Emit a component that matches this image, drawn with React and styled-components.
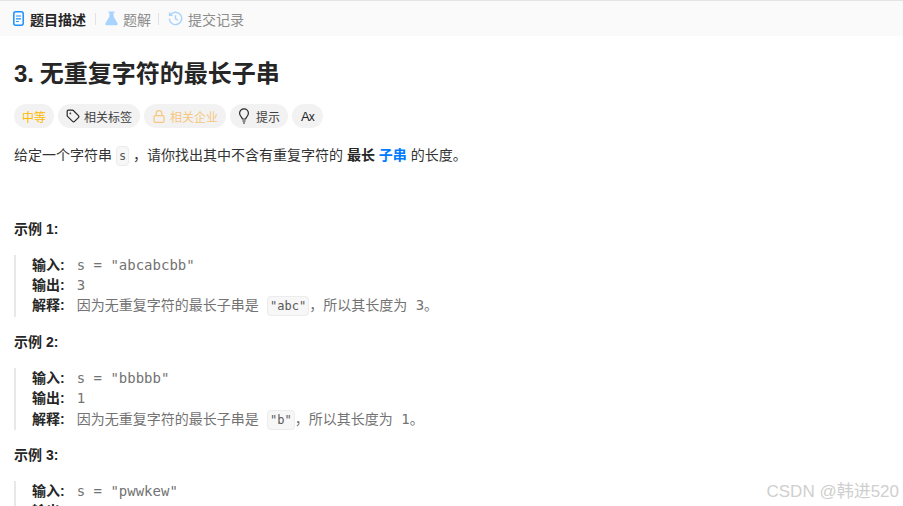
import React from "react";
import styled, { createGlobalStyle } from "styled-components";
import { Tag } from "lucide-react";

const cjk = `"Liberation Sans", "Noto Sans CJK SC", sans-serif`;
const mono = `"DejaVu Sans Mono", "Noto Sans CJK SC", monospace`;
const COMMA = "\uFF0C";

const GlobalStyle = createGlobalStyle`
  html, body {
    margin: 0;
    height: 100%;
    overflow: hidden;
    background: #fff;
  }
  body {
    font-family: ${cjk};
    color: #262626;
  }
`;

const Page = styled.div`
  position: relative;
  width: 903px;
  height: 506px;
  overflow: hidden;
`;

const TabBar = styled.div`
  display: flex;
  align-items: center;
  height: 35px;
  padding-left: 13px;
  background: #fafafa;
  border-top: 1px solid #e4e4e4;
`;

const TabItem = styled.div`
  display: flex;
  align-items: center;
  gap: ${props => props.gap}px;
  font-size: 14px;
  font-weight: ${props => (props.active ? 600 : 400)};
  color: ${props => (props.active ? "#262626" : "#8c8c8c")};
`;

const TabDivider = styled.div`
  width: 1px;
  height: 12px;
  margin: 0 9px 0 ${props => props.left}px;
  background: #e2e2e2;
`;

const Content = styled.div`
  padding: 0 14px;
`;

const Title = styled.h1`
  margin: 22px 0 0;
  font-size: 24px;
  line-height: 32px;
  font-weight: 700;
  word-spacing: -1px;
  color: #262626;
`;

const ChipRow = styled.div`
  display: flex;
  gap: 4px;
  margin-top: 14px;
`;

const Chip = styled.div`
  display: flex;
  align-items: center;
  gap: ${props => props.gap || 4}px;
  height: 24px;
  padding: 0 8px;
  border-radius: 12px;
  background: #f2f2f2;
  font-size: 12px;
  color: ${props => props.color || "#404040"};
`;

const Description = styled.p`
  margin: 16px 0 0;
  font-size: 14px;
  line-height: 22px;
  color: #333;
`;

const InlineCode = styled.code`
  font-family: ${mono};
  font-size: 12px;
  padding: 2px;
  color: #595959;
  background: #f7f7f7;
  border: 1px solid #ececec;
  border-radius: 4px;
`;

const Strong = styled.b`
  font-weight: 700;
  color: ${props => props.color || "#262626"};
`;

const ExampleTitle = styled.div`
  margin-top: ${props => props.top}px;
  font-size: 14px;
  line-height: 20px;
  font-weight: 700;
  color: #262626;
`;

const Quote = styled.div`
  margin-top: 15.5px;
  padding-left: 16px;
  border-left: 2px solid #e8e8e8;
  font-size: 14px;
  line-height: 20.4px;
  white-space: nowrap;
`;

const QuoteLine = styled.div`
  color: #737373;
  font-family: ${mono};

  b {
    font-family: ${cjk};
    font-weight: 700;
    color: #262626;
    margin-right: 12px;
  }
`;

const Prose = styled.span`
  font-family: ${cjk};
`;

const Watermark = styled.div`
  position: absolute;
  right: 4px;
  bottom: 2px;
  font-size: 17px;
  line-height: 24px;
  color: #cfcfcf;
`;

const TranslateGlyph = styled.span`
  font-size: 13px;
  letter-spacing: -1px;
  color: #262626;
  padding: 0 1px;
  small {
    font-size: 12px;
  }
`;

const DocIcon = () => (
  <svg width="11" height="15" viewBox="0 0 11 15" fill="none">
    <rect x=".8" y=".8" width="9.4" height="13.4" rx="2" stroke="#1a90ff" strokeWidth="1.5" />
    <path d="M3 5h5M3 7.8h5M3 10.5h2.8" stroke="#1a90ff" strokeWidth="1.2" />
  </svg>
);

const FlaskIcon = () => (
  <svg width="13" height="15" viewBox="0 0 13 15" fill="none">
    <path d="M3.500.6h6v1.200H8.600v3.700l4 7c.4.800-.1 1.700-1 1.700H1.400c-.9 0-1.400-.9-1-1.700l4-7V1.800h-.9z" fill="#a9d3ff" />
  </svg>
);

const HistoryIcon = () => (
  <svg width="15" height="15" viewBox="0 0 15 15" fill="none" stroke="#a9d3ff" strokeWidth="1.4">
    <path d="M2.200 4.200A6.200 6.200 0 1 1 1.300 7.500" />
    <path d="M1.600 1.400v3h3" />
    <path d="M7.500 4.200v3.600l2.300 1.300" />
  </svg>
);

const LockIcon = () => (
  <svg width="14" height="13" viewBox="0 0 14 13" fill="none" stroke="#f5c77e" strokeWidth="1.2">
    <rect x="2" y="5.600" width="10" height="6.800" rx="1.200" />
    <path d="M4.200 5.600V3.400a2.800 2.800 0 0 1 5.600 0v2.200" />
  </svg>
);

const BulbIcon = () => (
  <svg width="12" height="16" viewBox="0 0 12 16" fill="none" stroke="#262626" strokeWidth="1.2">
    <path d="M4.400 11C4.400 9.400 1.600 8.400 1.600 5.200a4.400 4.400 0 0 1 8.800 0c0 3.200-2.800 4.200-2.800 5.800z" />
    <path d="M4.400 13h3.200M5 15h2" />
  </svg>
);

const examples = [
  { num: 1, top: 52, input: `s = "abcabcbb"`, output: "3", sub: `"abc"` },
  { num: 2, top: 15.5, input: `s = "bbbbb"`, output: "1", sub: `"b"` },
];

const App = () => (
  <Page>
    <GlobalStyle />
    <TabBar>
      <TabItem active gap={6}>
        <DocIcon />
        题目描述
      </TabItem>
      <TabDivider left={9} />
      <TabItem gap={5}>
        <FlaskIcon />
        题解
      </TabItem>
      <TabDivider left={7} />
      <TabItem gap={5}>
        <HistoryIcon />
        提交记录
      </TabItem>
    </TabBar>
    <Content>
      <Title>3. 无重复字符的最长子串</Title>
      <ChipRow>
        <Chip color="#ffb800">中等</Chip>
        <Chip>
          <Tag size={14} color="#262626" />
          相关标签
        </Chip>
        <Chip color="#f5c77e" gap={4}>
          <LockIcon />
          相关企业
        </Chip>
        <Chip gap={6}>
          <BulbIcon />
          提示
        </Chip>
        <Chip>
          <TranslateGlyph>
            A<small>x</small>
          </TranslateGlyph>
        </Chip>
      </ChipRow>
      <Description>
        给定一个字符串 <InlineCode>s</InlineCode> {COMMA}请你找出其中不含有重复字符的 <Strong>最长</Strong>{" "}
        <Strong color="#007aff">子串</Strong> 的长度。
      </Description>
      {examples.map(example => (
        <React.Fragment key={example.num}>
          <ExampleTitle top={example.top}>示例 {example.num}:</ExampleTitle>
          <Quote>
            <QuoteLine>
              <b>输入:</b>
              {example.input}
            </QuoteLine>
            <QuoteLine>
              <b>输出:</b>
              {example.output}
            </QuoteLine>
            <QuoteLine>
              <b>解释:</b>
              <Prose>因为无重复字符的最长子串是</Prose> <InlineCode>{example.sub}</InlineCode>
              <Prose>{COMMA}所以其长度为</Prose> {example.output}
              <Prose>。</Prose>
            </QuoteLine>
          </Quote>
        </React.Fragment>
      ))}
      <ExampleTitle top={15.5}>示例 3:</ExampleTitle>
      <Quote>
        <QuoteLine>
          <b>输入:</b>
          {`s = "pwwkew"`}
        </QuoteLine>
        <QuoteLine>
          <b>输出:</b>3
        </QuoteLine>
      </Quote>
    </Content>
    <Watermark>CSDN @韩进520</Watermark>
  </Page>
);

export default App;
